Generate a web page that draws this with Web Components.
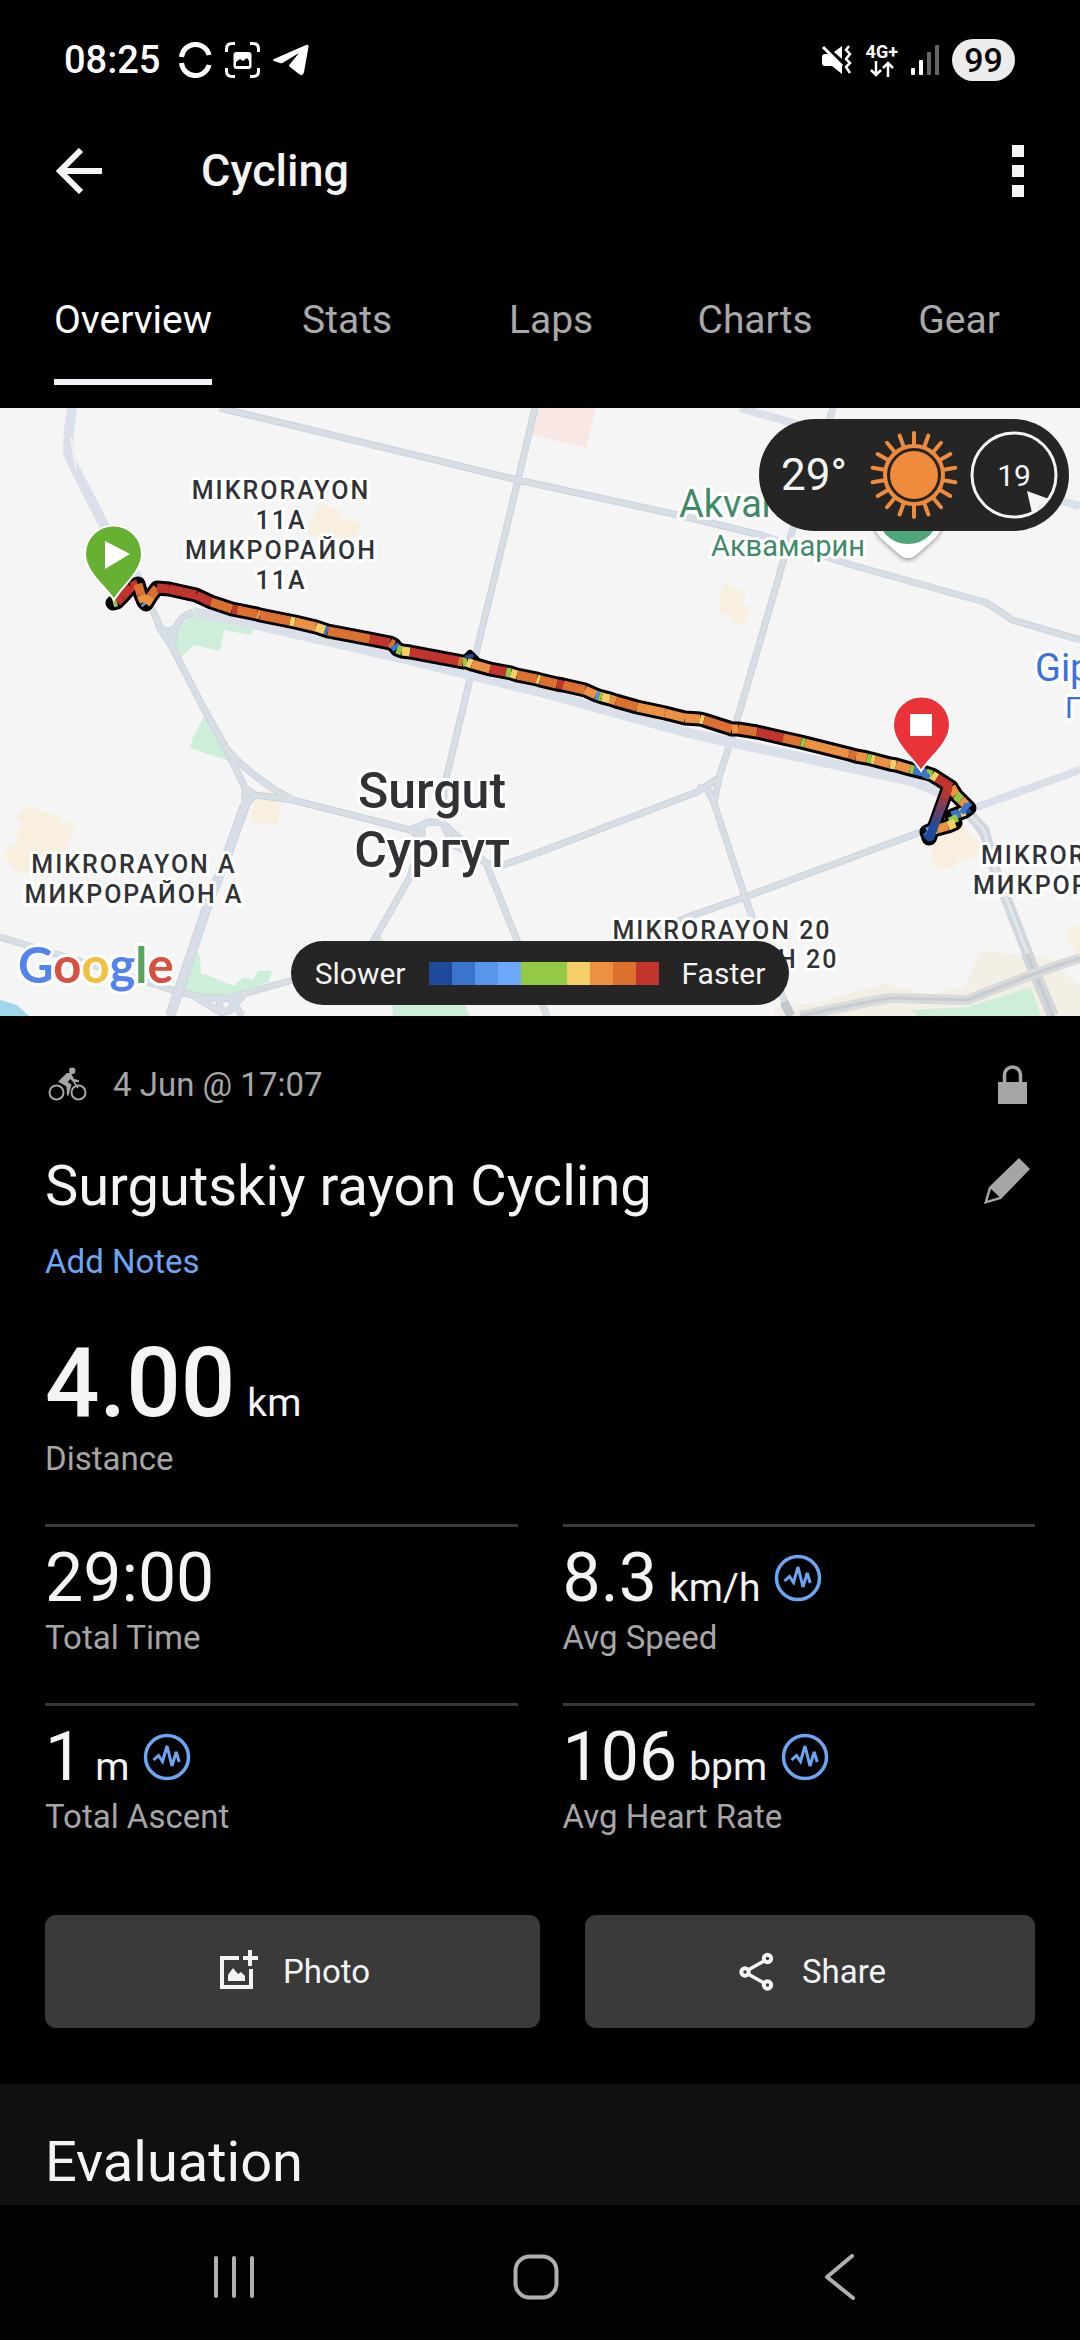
<!DOCTYPE html>
<html lang="en">
<head>
<meta charset="utf-8">
<meta name="viewport" content="width=device-width, initial-scale=1">
<title>Cycling</title>
<style>
    body {
        margin: 0;
        background: #000;
        color: #f4f4f4;
        font-family: Roboto, "Noto Sans", sans-serif;
        font-size: 33px;
        line-height: 39px;
    }
</style>
</head>
<body>

<activity-app>
    <status-bar slot="top" time="08:25" battery="99"></status-bar>
    <app-header slot="top" heading="Cycling"></app-header>
    <tab-strip slot="top" tabs="Overview,Stats,Laps,Charts,Gear" active="Overview"></tab-strip>

    <route-map>
        <weather-pill slot="weather" temperature="29°" wind="19"></weather-pill>
        <speed-legend slot="legend" low="Slower" high="Faster"></speed-legend>
    </route-map>

    <activity-summary>
        <span slot="date">4 Jun @ 17:07</span>
        <span slot="title">Surgutskiy rayon Cycling</span>
        <stat-item slot="hero" size="large" value="4.00" unit="km">Distance</stat-item>
        <stat-item value="29:00">Total Time</stat-item>
        <stat-item value="8.3" unit="km/h" chart>Avg Speed</stat-item>
        <stat-item value="1" unit="m" chart>Total Ascent</stat-item>
        <stat-item value="106" unit="bpm" chart>Avg Heart Rate</stat-item>
        <action-button slot="actions" icon="photo">Photo</action-button>
        <action-button slot="actions" icon="share">Share</action-button>
    </activity-summary>

    <page-section heading="Evaluation"></page-section>

    <nav-bar slot="bottom"></nav-bar>
</activity-app>

<script>
const ICONS = {
    photo: `
        <svg width="45" height="45" viewBox="0 0 45 45" fill="none" stroke="currentColor" stroke-width="4" aria-hidden="true">
            <path d="M24 9H7v29h29V20"/>
            <path d="M35 1v16M28 9h15"/>
            <path d="M13 32v-6l5-7 5 6 3-2 4 4v5z" fill="currentColor" stroke="none"/>
        </svg>`,
    share: `
        <svg width="45" height="45" viewBox="0 0 45 45" fill="none" stroke="currentColor" stroke-width="4" aria-hidden="true">
            <path d="M14 21l16-9M14 25l16 9" stroke-width="3.5"/>
            <circle cx="11" cy="23" r="3.7"/>
            <circle cx="33.5" cy="9.500" r="3.7"/>
            <circle cx="33.5" cy="36" r="3.7"/>
        </svg>`
};

class ActivityApp extends HTMLElement {
    connectedCallback() {
        this.attachShadow({ mode: 'open' }).innerHTML = `
        <style>
            :host {
                display: flex;
                flex-direction: column;
                min-height: 100vh;
            }

            main {
                flex: 1;
                display: flex;
                flex-direction: column;
            }
        </style>
        <slot name="top"></slot>
        <main><slot></slot></main>
        <slot name="bottom"></slot>
        `;
    }
}

class StatusBar extends HTMLElement {
    connectedCallback() {
        this.attachShadow({ mode: 'open' }).innerHTML = `
        <style>
            :host {
                display: flex;
                align-items: center;
                justify-content: space-between;
                height: 120px;
                padding: 0 65px 0 64px;
                color: #fff;
            }

            .side {
                display: flex;
                align-items: center;
                gap: 13px;
            }

            time {
                font-size: 38px;
                font-weight: 500;
                margin-right: 6px;
            }

            svg {
                display: block;
            }

            .network {
                display: flex;
                flex-direction: column;
                align-items: center;
                font-size: 18px;
                font-weight: 700;
                line-height: 18px;
            }

            .battery {
                box-sizing: border-box;
                min-width: 63px;
                padding: 0 12px;
                border-radius: 21px;
                background: #ececec;
                color: #000;
                font-size: 34px;
                font-weight: 500;
                line-height: 42px;
                text-align: center;
            }
        </style>
        <div class="side">
            <time>${this.getAttribute('time')}</time>
            <svg width="33" height="36" viewBox="0 0 33 36" fill="none" stroke="#fff" stroke-width="5" aria-hidden="true">
                <path d="M2.500 15A14 14 0 0 1 30 13"/>
                <path d="M2.500 21A14 14 0 0 0 30 23"/>
            </svg>
            <svg width="35" height="36" viewBox="0 0 35 36" aria-hidden="true">
                <path d="M1.500 10V7q0-5.500 5.500-5.500h3M25 1.500h3q5.500 0 5.500 5.500v3M1.500 26v3q0 5.500 5.500 5.500h3M25 34.500h3q5.500 0 5.500-5.500v-3" fill="none" stroke="#fff" stroke-width="3"/>
                <rect x="8.500" y="10" width="18" height="17" rx="3" fill="#fff"/>
                <path d="M11 24v-4l4-3 3 2 4-3 2 3v5z" fill="#000"/>
            </svg>
            <svg width="36" height="36" viewBox="0 0 36 36" aria-hidden="true">
                <path d="M1 17L33 3q3-1 2.500 2L31 30q-1 5-5 2l-9-7q-2-1 0-3l9-11-15 9q-2 2-4 1l-6-2q-2-1 0-2z" fill="#fff"/>
            </svg>
        </div>
        <div class="side">
            <svg width="32" height="32" viewBox="0 0 32 32" aria-hidden="true">
                <path d="M1 13q0-3 3-3h5l12 12v8L11 22H4q-3 0-3-3z" fill="#fff"/>
                <path d="M13 8l8-6v13z" fill="#fff"/>
                <path d="M2 3l19 19" stroke="#fff" stroke-width="3"/>
                <path d="M28 2l-3 4 4 4-4 5 4 4-4 4 4 6" fill="none" stroke="#fff" stroke-width="2.500"/>
            </svg>
            <div class="network">4G+
                <svg width="24" height="16" viewBox="0 0 24 16" fill="none" stroke="#fff" stroke-width="2.500" aria-hidden="true">
                    <path d="M6 0v14M1 9l5 5 5-5M18 16V2M13 7l5-5 5 5"/>
                </svg>
            </div>
            <svg width="28" height="30" viewBox="0 0 28 30" aria-hidden="true">
                <rect x="0" y="23" width="4" height="7" rx="1" fill="#fff"/>
                <rect x="8" y="15" width="4" height="15" rx="1" fill="#fff"/>
                <rect x="16" y="7" width="4" height="23" rx="1" fill="#666"/>
                <rect x="24" y="0" width="4" height="30" rx="1" fill="#666"/>
            </svg>
            <span class="battery">${this.getAttribute('battery')}</span>
        </div>
        `;
    }
}

class AppHeader extends HTMLElement {
    connectedCallback() {
        this.attachShadow({ mode: 'open' }).innerHTML = `
        <style>
            :host {
                display: flex;
                align-items: center;
                height: 102px;
                padding: 0 34px;
            }

            button {
                display: flex;
                align-items: center;
                justify-content: center;
                width: 90px;
                height: 90px;
                padding: 0;
                border: 0;
                background: none;
                color: inherit;
            }

            button:last-child {
                width: 56px;
            }

            h1 {
                flex: 1;
                margin: 0;
                padding-left: 77px;
                font-size: 45px;
                font-weight: 500;
                line-height: 54px;
            }
        </style>
        <button aria-label="Back">
            <svg width="46" height="46" viewBox="0 0 46 46" fill="none" stroke="currentColor" stroke-width="6">
                <path d="M25 2L4 23l21 21M4 23h42"/>
            </svg>
        </button>
        <h1>${this.getAttribute('heading')}</h1>
        <button aria-label="More options">
            <svg width="12" height="52" viewBox="0 0 12 52" fill="currentColor">
                <path d="M0 0h12v12H0zM0 20h12v12H0zM0 40h12v12H0z"/>
            </svg>
        </button>
        `;
    }
}

class TabStrip extends HTMLElement {
    connectedCallback() {
        this.attachShadow({ mode: 'open' });
        this.render();
        this.shadowRoot.addEventListener('click', (e) => {
            const tab = e.target.closest('button');
            if (!tab) return;
            this.setAttribute('active', tab.textContent.trim());
            this.render();
        });
    }

    render() {
        const active = this.getAttribute('active');
        const tabs = this.getAttribute('tabs').split(',');

        this.shadowRoot.innerHTML = `
        <style>
            :host {
                display: block;
                padding: 75px 19px 23px 21px;
            }

            div {
                display: flex;
            }

            button {
                flex: 0 0 auto;
                min-width: 204px;
                padding: 0 33px;
                border: 0;
                background: none;
                color: #a9a9a9;
                font: inherit;
                font-size: 39px;
                line-height: 46px;
            }

            span {
                display: inline-block;
                padding-bottom: 36px;
                border-bottom: 6px solid transparent;
            }

            [aria-selected="true"] {
                color: #fff;
            }

            [aria-selected="true"] span {
                border-color: #f2f0f4;
            }
        </style>
        <div role="tablist">
            ${tabs.map(t => `<button role="tab" aria-selected="${t === active}"><span>${t}</span></button>`).join('')}
        </div>
        `;
    }
}

// Speed palette, slowest to fastest
const SPEED = {
    navy: '#1f4a9c',
    blue: '#3a74cc',
    sky: '#5896ec',
    pale: '#6ea8f8',
    green: '#94c944',
    lime: '#94c944',
    yellow: '#f4cf66',
    amber: '#ec9142',
    orange: '#dc702e',
    red: '#c2352d'
};

// Each point carries the colour of the segment that ends in it
const TRACK = [
    [113, 195, 'blue'], [117, 194, 'green'], [122, 189, 'red'], [131, 179, 'red'], [138, 176, 'red'],
    [141, 187, 'orange'], [144, 194, 'amber'], [146, 196, 'sky'], [151, 188, 'amber'], [157, 180, 'orange'], [169, 181, 'red'],
    [196, 187, 'red'], [211, 194, 'red'], [232, 201, 'orange'], [237, 202, 'red'], [257, 206, 'orange'],
    [260, 207, 'amber'], [290, 213, 'orange'], [295, 214, 'yellow'], [316, 219, 'amber'], [325, 222, 'yellow'],
    [328, 223, 'blue'], [370, 231, 'orange'], [390, 235, 'red'], [394, 237, 'orange'], [397, 241, 'blue'], [402, 243, 'green'],
    [410, 244, 'yellow'], [458, 253, 'red'], [463, 254, 'orange'], [467, 254, 'green'], [472, 256, 'yellow'],
    [490, 261, 'amber'], [506, 264, 'red'], [511, 265, 'green'], [517, 267, 'yellow'], [537, 271, 'orange'],
    [540, 272, 'yellow'], [557, 276, 'orange'], [563, 277, 'red'], [585, 282, 'orange'], [596, 287, 'amber'],
    [599, 288, 'sky'], [602, 289, 'green'], [610, 291, 'yellow'], [616, 293, 'amber'], [637, 299, 'orange'],
    [665, 305, 'amber'], [685, 310, 'amber'], [700, 311, 'amber'], [704, 312, 'yellow'], [732, 321, 'orange'],
    [738, 321, 'amber'], [757, 324, 'orange'], [783, 330, 'red'], [801, 334, 'orange'], [805, 335, 'green'],
    [849, 346, 'amber'], [856, 348, 'orange'], [867, 350, 'amber'], [871, 351, 'green'], [875, 352, 'yellow'],
    [890, 356, 'amber'], [896, 357, 'yellow'], [910, 361, 'amber'], [914, 362, 'green'], [926, 365, 'blue'],
    [932, 367, 'green'], [937, 370, 'yellow'], [951, 379, 'red'], [956, 387, 'amber'], [961, 392, 'green'],
    [966, 397, 'amber'], [969, 400, 'blue'], [965, 403, 'navy'], [960, 405, 'yellow'], [952, 408, 'blue'], [955, 415, 'green'],
    [948, 418, 'yellow'], [937, 421, 'amber'], [932, 422, 'yellow'], [927, 424, 'sky'], [929, 430, 'navy']
];

const ROADS = [
    'M148 192L160 219Q172 230 182 210L193 204M158 217L172 239L203 299L226 340L245 380V397L229 442',
    'M193 204Q172 210 173 242',
    'M226 340Q240 358 272 380L293 392M245 380L255 387L293 392L410 422L429 414L443 415L486 455L517 532L547 608',
    'M255 387L245 397',
    'M0 529L83 554L179 584L207 590H229L293 572L374 550',
    'M195 589L222 605L229 602L243 588M234 595L242 608M219 599Q219 590 226 590Q235 592 233 600Q226 607 219 599',
    'M535 0L518 72L477 242L444 379L443 415M422 417V430L410 469L374 532L350 575',
    'M410 422L422 430M443 415L452 436L486 455M486 455L503 457L540 444L697 384L719 370L740 302L793 120L822 18Q826 16 829 12L833 0',
    'M697 380L707 380L714 395L745 489L756 520L784 592L791 608M719 370L714 395',
    'M650 526L688 509L745 489L926 422L969 402',
    'M220 0L518 72L678 107L760 127L852 157L984 194Q996 200 1012 212L1080 232',
    'M967 405L986 430L994 459L1029 549'
];

const points = list => list.map(p => `${p[0]},${p[1]}`).join(' ');

class RouteMap extends HTMLElement {
    connectedCallback() {
        const segments = TRACK.slice(1).map((p, i) => `
            <line x1="${TRACK[i][0]}" y1="${TRACK[i][1]}" x2="${p[0]}" y2="${p[1]}" stroke="${SPEED[p[2]]}"/>`).join('');
        const roads = ROADS.join('');

        this.attachShadow({ mode: 'open' }).innerHTML = `
        <style>
            :host {
                display: block;
                position: relative;
                overflow: hidden;
                background: #f5f5f5;
            }

            svg {
                display: block;
                width: 100%;
                height: auto;
            }

            text {
                paint-order: stroke;
                stroke: #fff;
                stroke-width: 6px;
                stroke-linejoin: round;
                fill: #303236;
            }

            .district {
                font-size: 25px;
                font-weight: 500;
                letter-spacing: 2px;
            }

            .city {
                font-size: 50px;
                font-weight: 500;
            }

            .place {
                font-size: 38px;
            }

            .place-local {
                font-size: 29px;
            }

            .green {
                fill: #3f8a68;
            }

            .blue {
                fill: #3c72d8;
            }

            .brand {
                font-family: Lato, sans-serif;
                font-size: 49px;
                font-weight: 700;
            }

            slot[name="weather"]::slotted(*) {
                position: absolute;
                top: 11px;
                right: 11px;
            }

            .legend {
                position: absolute;
                left: 0;
                right: 0;
                bottom: 11px;
                display: flex;
                justify-content: center;
            }
        </style>

        <svg viewBox="0 0 1080 608" role="img" aria-label="Route map">
            <defs>
                <linearGradient id="return" gradientUnits="userSpaceOnUse" x1="948" y1="382" x2="930" y2="430">
                    <stop offset="0" stop-color="#c2352d"/>
                    <stop offset=".8" stop-color="#1f4a9c"/>
                </linearGradient>
                <filter id="drop" x="-20%" y="-20%" width="140%" height="150%">
                    <feDropShadow dx="0" dy="2" stdDeviation="2" flood-opacity=".4"/>
                </filter>
            </defs>

            <g fill="#f8efdf">
                <path d="M320 95L341 102 339 109 361 115 356 130 308 128 313 109z"/>
                <path d="M724 175L745 184 743 195 750 200 748 210 740 217 733 214 730 207 718 205 722 191 718 189z"/>
                <path d="M29 398L59 408 60 414 76 415 65 444 28 465 14 462 4 447 9 437 15 438 21 414 15 409z"/>
                <path d="M262 382L275 384 282 395 277 416 250 414 255 389z"/>
                <path d="M933 435L962 417 981 435 977 449 958 452 955 459 941 463 931 454z"/>
                <path d="M1072 516L1066 526 1080 552V520z"/>
            </g>
            <path d="M774 599L815 595 884 576 929 587 964 579 981 543 1050 550 1080 579V608H774z" fill="#f4efe4"/>
            <path d="M536 0H596L586 40 532 27z" fill="#f9e7e4"/>
            <g fill="#cdefd9">
                <path d="M191 207L207 205 255 220 250 227 224 222 220 243 193 237 179 252 174 242 176 225z"/>
                <path d="M205 307L193 329 190 340 229 353 226 340z"/>
                <path d="M196 541L200 549 201 565 234 578 244 569 253 572 258 563H272L269 574 238 585 207 589 181 584z"/>
                <path d="M392 597H465L470 608H393zM379 526L384 534H375z"/>
                <path d="M912 602L967 599 1031 579 1041 608H917z"/>
            </g>
            <path d="M0 592L17 597 29 608H0z" fill="#9ed8ea"/>

            <g fill="none" stroke-linejoin="round">
                <path d="${roads}" stroke="#cad3dc" stroke-width="7"/>
                <path d="${roads}" stroke="#d8dee5" stroke-width="5"/>
                <g stroke="#dae0e9" stroke-width="10">
                    <path d="M72 0L69 22 68 44 73 57 103 115 115 139" />
                    <path d="M115 139L138 167 148 192" stroke-width="7"/>
                    <path d="M193 204L248 215 396 249 540 284 685 324 729 334 880 366 915 374 942 386"/>
                    <path d="M740 0L793 15 900 50 1080 98" stroke-width="8"/>
                    <path d="M969 402L1080 362" stroke-width="8"/>
                </g>
                <path d="M71 30L76 60" stroke="#f0f2f5" stroke-width="2"/>
                <path d="M245 397L229 442 207 499 179 582 170 608" stroke="#cad3dc" stroke-width="10"/>
                <path d="M245 397L229 442 207 499 179 582 170 608" stroke="#d8dee8" stroke-width="8"/>
                <path d="M970 407L984 422 994 459 1008 495 1029 549" stroke="#d0d7df" stroke-width="11"/>
                <path d="M970 407L984 422 994 459 1008 495 1029 549" stroke="#e2e7ec" stroke-width="3"/>
                <path d="M1027 546L1053 608" stroke="#d2d5da" stroke-width="12"/>
                <path d="M1027 546L1053 608" stroke="#c5cad0" stroke-width="3"/>
                <path d="M800 608L867 594 890 590 967 592 1036 565 1080 550" stroke="#d8dadc" stroke-width="10"/>
                <path d="M800 608L867 594 890 590 967 592 1036 565 1080 550" stroke="#c8ccd0" stroke-width="3"/>
                <path d="M784 594L791 608" stroke="#c2c7cc" stroke-width="9"/>
            </g>

            <g text-anchor="middle">
                <g class="district">
                    <text x="281" y="91">MIKRORAYON</text>
                    <text x="281" y="121">11A</text>
                    <text x="281" y="151">МИКРОРАЙОН</text>
                    <text x="281" y="181">11А</text>
                    <text x="134" y="465">MIKRORAYON A</text>
                    <text x="134" y="495">МИКРОРАЙОН А</text>
                    <text x="722" y="531">MIKRORAYON 20</text>
                    <text x="722" y="560">МИКРОРАЙОН 20</text>
                </g>
                <g class="city">
                    <text x="432" y="400">Surgut</text>
                    <text x="432" y="459">Сургут</text>
                </g>
            </g>
            <g class="district">
                <text x="981" y="456">MIKRORAYON</text>
                <text x="973" y="486">МИКРОРАЙОН</text>
            </g>
            <text class="place green" x="679" y="109">Akvamarin</text>
            <text class="place-local green" x="711" y="148">Аквамарин</text>
            <text class="place blue" x="1035" y="273">Gip</text>
            <text class="place-local blue" x="1065" y="310">Г</text>

            <g filter="url(#drop)">
                <path d="M871 106a37 37 0 0 1 74 0q0 12-10 24l-18 16q-9 8-18 0l-18-16q-10-12-10-24z" fill="#fff"/>
                <circle cx="908" cy="105" r="31" fill="#4fa678"/>
            </g>

            <g fill="none" stroke-linejoin="round" stroke-linecap="round">
                <polyline points="${points(TRACK)}" stroke="#000" stroke-width="15"/>
                <path d="M464 252L470 246 476 252" stroke="#000" stroke-width="8"/>
                <path d="M948 380L930 430" stroke="#000" stroke-width="14"/>
                <g stroke-width="9" stroke-linecap="butt">${segments}</g>
                <path d="M467 249L472 248" stroke="#1f4a9c" stroke-width="4"/>
                <path d="M922 365L927 368M966 398L963 403M928 426L931 429" stroke="#3a74cc" stroke-width="6"/>
                <path d="M948 380L930 429" stroke="url(#return)" stroke-width="9"/>
            </g>

            <path d="M114 192C105 178 85 164 85 146a28.500 28.500 0 0 1 57 0C142 164 122 178 114 192z" fill="#66b032" stroke="#fff" stroke-width="2"/>
            <path d="M105 133L130 146 105 161z" fill="#fff"/>
            <path d="M921 363C912 349 893 335 893 317a28.500 28.500 0 0 1 57 0C950 335 930 349 921 363z" fill="#e93338" stroke="#fff" stroke-width="2"/>
            <path d="M910 306h22v22h-22z" fill="#fff"/>

            <text class="brand" x="18" y="575"><tspan fill="#5383ec">G</tspan><tspan fill="#d85140">o</tspan><tspan fill="#f1bf42">o</tspan><tspan fill="#5383ec">g</tspan><tspan fill="#58a55c">l</tspan><tspan fill="#d85140">e</tspan></text>
        </svg>

        <slot name="weather"></slot>
        <div class="legend"><slot name="legend"></slot></div>
        `;
    }
}

class WeatherPill extends HTMLElement {
    connectedCallback() {
        const rays = Array.from({ length: 18 }, (_, i) =>
            `<path d="M44 2v12" transform="rotate(${i * 20} 44 44)"/>`).join('');

        this.attachShadow({ mode: 'open' }).innerHTML = `
        <style>
            :host {
                display: flex;
                align-items: center;
                gap: 12px;
                height: 112px;
                padding: 0 11px 0 22px;
                border-radius: 56px;
                background: #252525;
            }

            .temperature {
                margin-right: 11px;
                font-size: 44px;
            }

            svg {
                display: block;
            }

            .wind {
                display: grid;
                place-items: center;
                font-size: 30px;
            }

            .wind > * {
                grid-area: 1 / 1;
            }
        </style>
        <span class="temperature">${this.getAttribute('temperature')}</span>
        <svg width="88" height="88" viewBox="0 0 88 88" fill="none" stroke="#ee8b3c" stroke-width="4" stroke-linecap="round" role="img" aria-label="Sunny">
            ${rays}
            <circle cx="44" cy="44" r="29"/>
            <circle cx="44" cy="44" r="24" fill="#ee8b3c" stroke="none"/>
        </svg>
        <div class="wind">
            <svg width="88" height="88" viewBox="0 0 88 88" aria-hidden="true">
                <circle cx="44" cy="44" r="42" fill="none" stroke="#f4f4f4" stroke-width="3"/>
                <path d="M57 60L79 68 62 82z" fill="#f4f4f4"/>
            </svg>
            <span>${this.getAttribute('wind')}</span>
        </div>
        `;
    }
}

class SpeedLegend extends HTMLElement {
    connectedCallback() {
        this.attachShadow({ mode: 'open' }).innerHTML = `
        <style>
            :host {
                display: flex;
                align-items: center;
                gap: 23px;
                height: 64px;
                padding: 0 24px;
                border-radius: 32px;
                background: #252525;
                font-size: 30px;
            }

            .scale {
                display: flex;
            }

            i {
                width: 23px;
                height: 23px;
            }
        </style>
        <span>${this.getAttribute('low')}</span>
        <div class="scale">${Object.values(SPEED).map(c => `<i style="background: ${c}"></i>`).join('')}</div>
        <span>${this.getAttribute('high')}</span>
        `;
    }
}

class ActivitySummary extends HTMLElement {
    connectedCallback() {
        this.attachShadow({ mode: 'open' }).innerHTML = `
        <style>
            :host {
                display: block;
                padding: 49px 45px 56px;
            }

            .meta {
                display: flex;
                align-items: center;
                gap: 23px;
                margin-bottom: 49px;
                color: #a6a6a6;
            }

            .meta slot {
                display: block;
                flex: 1;
            }

            .title {
                display: flex;
                justify-content: space-between;
            }

            h2 {
                margin: 0;
                font-size: 56px;
                font-weight: 400;
                line-height: 66px;
            }

            button {
                padding: 0;
                border: 0;
                background: none;
                color: #a6a6a6;
            }

            svg {
                display: block;
            }

            a {
                display: inline-block;
                margin: 23px 0 46px;
                color: #6ca6f2;
                text-decoration: none;
            }

            .stats {
                display: grid;
                grid-template-columns: 1fr 1fr;
                gap: 46px 45px;
                margin: 46px 0 79px;
            }

            .actions {
                display: grid;
                grid-template-columns: 11fr 10fr;
                gap: 45px;
            }
        </style>

        <div class="meta">
            <svg width="45" height="39" viewBox="0 0 45 39" fill="none" stroke="currentColor" stroke-width="2" aria-hidden="true">
                <circle cx="11.500" cy="27.500" r="7"/>
                <circle cx="33.500" cy="27.500" r="7"/>
                <circle cx="27.300" cy="5.800" r="3.200" fill="currentColor" stroke="none"/>
                <path d="M22 8h4l3 6 5 1v2h-6l-2.500-3-3 3 4 2.500-3 11h-1.500l-.5-9-8.500-5z" fill="currentColor" stroke="none"/>
                <path d="M29 17l4 6" stroke-width="1.500"/>
            </svg>
            <slot name="date"></slot>
            <svg width="45" height="39" viewBox="0 0 45 39" role="img" aria-label="Private">
                <path d="M8 17h29v22H8z" fill="currentColor"/>
                <path d="M14.500 18V10a8 8 0 0 1 16 0v8" fill="none" stroke="currentColor" stroke-width="3.500"/>
            </svg>
        </div>

        <div class="title">
            <h2><slot name="title"></slot></h2>
            <button aria-label="Edit title">
                <svg width="56" height="66" viewBox="0 0 56 66" fill="currentColor" fill-rule="evenodd">
                    <path d="M40 5L51 16 22 46 5 51 10 34zM12 36L8.500 47.500 20.500 44z"/>
                </svg>
            </button>
        </div>

        <a href="#notes">Add Notes</a>
        <slot name="hero"></slot>
        <div class="stats"><slot></slot></div>
        <div class="actions"><slot name="actions"></slot></div>
        `;
    }
}

class StatItem extends HTMLElement {
    connectedCallback() {
        const unit = this.getAttribute('unit');
        const chart = `
            <button aria-label="Show chart">
                <svg width="48" height="48" viewBox="0 0 48 48" fill="none" stroke="#6ca6f2">
                    <circle cx="24" cy="24" r="21.500" stroke-width="3.500"/>
                    <path d="M10.500 27l5-4.500 4 6L24 13l5 20 4.200-14 3 10" stroke-width="3" stroke-miterlimit="3"/>
                </svg>
            </button>`;

        this.attachShadow({ mode: 'open' }).innerHTML = `
        <style>
            :host {
                display: block;
                border-top: 3px solid #3a3a3a;
                padding-top: 11px;
            }

            :host([size="large"]) {
                border: 0;
                padding: 0;
            }

            .value {
                display: flex;
                align-items: baseline;
                gap: 12px;
                font-size: 68px;
                line-height: 80px;
            }

            :host([size="large"]) .value {
                font-size: 96px;
                line-height: 112px;
            }

            :host([size="large"]) b {
                font-weight: 500;
            }

            b {
                font-weight: 400;
            }

            .unit {
                font-size: 39px;
                line-height: 46px;
            }

            button {
                align-self: center;
                padding: 0 2px;
                border: 0;
                background: none;
            }

            svg {
                display: block;
            }

            .label {
                color: #a6a6a6;
            }
        </style>
        <div class="value">
            <b>${this.getAttribute('value')}</b>
            ${unit ? `<span class="unit">${unit}</span>` : ''}
            ${this.hasAttribute('chart') ? chart : ''}
        </div>
        <div class="label"><slot></slot></div>
        `;
    }
}

class ActionButton extends HTMLElement {
    connectedCallback() {
        this.attachShadow({ mode: 'open' }).innerHTML = `
        <style>
            :host {
                display: block;
            }

            button {
                display: flex;
                align-items: center;
                justify-content: center;
                gap: 23px;
                width: 100%;
                height: 113px;
                border: 0;
                border-radius: 11px;
                background: #3a3a3a;
                color: #f4f4f4;
                font: inherit;
            }
        </style>
        <button>${ICONS[this.getAttribute('icon')]}<slot></slot></button>
        `;
    }
}

class PageSection extends HTMLElement {
    connectedCallback() {
        this.attachShadow({ mode: 'open' }).innerHTML = `
        <style>
            :host {
                display: block;
                flex: 1;
                padding: 45px 45px 0;
                background: #101010;
            }

            h2 {
                margin: 0;
                font-size: 56px;
                font-weight: 400;
                line-height: 66px;
            }
        </style>
        <h2>${this.getAttribute('heading')}</h2>
        <slot></slot>
        `;
    }
}

class NavBar extends HTMLElement {
    connectedCallback() {
        this.attachShadow({ mode: 'open' }).innerHTML = `
        <style>
            :host {
                display: grid;
                grid-template-columns: repeat(3, 1fr);
                height: 135px;
                padding: 0 90px 0 83px;
                background: #020202;
            }

            button {
                display: flex;
                align-items: center;
                justify-content: center;
                padding: 9px 0 0;
                border: 0;
                background: none;
                color: #b0b0b0;
            }
        </style>
        <button aria-label="Recent apps">
            <svg width="46" height="46" viewBox="0 0 46 46" fill="none" stroke="currentColor" stroke-width="4" stroke-linecap="round">
                <path d="M5 4v38M23 4v38M41 4v38"/>
            </svg>
        </button>
        <button aria-label="Home">
            <svg width="46" height="46" viewBox="0 0 46 46" fill="none" stroke="currentColor" stroke-width="4">
                <rect x="2.500" y="2.500" width="41" height="41" rx="14"/>
            </svg>
        </button>
        <button aria-label="Back">
            <svg width="46" height="46" viewBox="0 0 46 46" fill="none" stroke="currentColor" stroke-width="4" stroke-linecap="round" stroke-linejoin="round">
                <path d="M36 2L11 23l26 21"/>
            </svg>
        </button>
        `;
    }
}

customElements.define('activity-app', ActivityApp);
customElements.define('status-bar', StatusBar);
customElements.define('app-header', AppHeader);
customElements.define('tab-strip', TabStrip);
customElements.define('route-map', RouteMap);
customElements.define('weather-pill', WeatherPill);
customElements.define('speed-legend', SpeedLegend);
customElements.define('activity-summary', ActivitySummary);
customElements.define('stat-item', StatItem);
customElements.define('action-button', ActionButton);
customElements.define('page-section', PageSection);
customElements.define('nav-bar', NavBar);
</script>
</body>
</html>
